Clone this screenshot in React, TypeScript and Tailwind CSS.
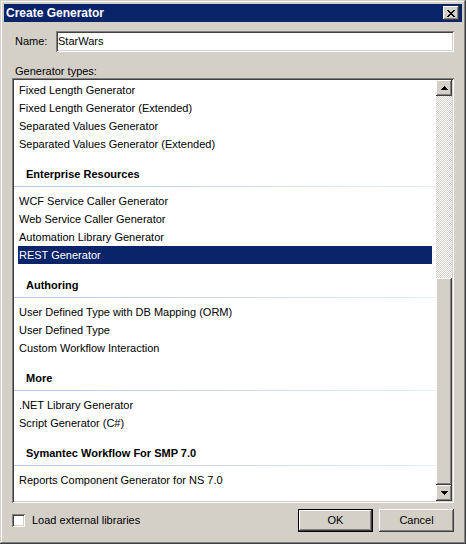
import React from "react";

const raised =
  "shadow-[inset_-1px_-1px_#404040,inset_1px_1px_#ffffff,inset_-2px_-2px_#808080,inset_2px_2px_#d4d0c8]";
const sunken =
  "shadow-[inset_1px_1px_#808080,inset_-1px_-1px_#ffffff,inset_2px_2px_#404040,inset_-2px_-2px_#d4d0c8]";

type Group = { title?: string; items: string[] };

const groups: Group[] = [
  {
    items: [
      "Fixed Length Generator",
      "Fixed Length Generator (Extended)",
      "Separated Values Generator",
      "Separated Values Generator (Extended)",
    ],
  },
  {
    title: "Enterprise Resources",
    items: [
      "WCF Service Caller Generator",
      "Web Service Caller Generator",
      "Automation Library Generator",
      "REST Generator",
    ],
  },
  {
    title: "Authoring",
    items: [
      "User Defined Type with DB Mapping (ORM)",
      "User Defined Type",
      "Custom Workflow Interaction",
    ],
  },
  {
    title: "More",
    items: [".NET Library Generator", "Script Generator (C#)"],
  },
  {
    title: "Symantec Workflow For SMP 7.0",
    items: ["Reports Component Generator for NS 7.0"],
  },
];

function CloseGlyph() {
  const rows = [
    "xx....xx",
    ".xx..xx.",
    "..xxxx..",
    "...xx...",
    "..xxxx..",
    ".xx..xx.",
    "xx....xx",
  ];
  return (
    <svg width="8" height="7" viewBox="0 0 8 7" shapeRendering="crispEdges">
      {rows.map((r, y) =>
        r.split("").map((c, x) =>
          c === "x" ? <rect key={`${x}-${y}`} x={x} y={y} width="1" height="1" fill="#000" /> : null
        )
      )}
    </svg>
  );
}

function Arrow({ up }: { up: boolean }) {
  return (
    <svg width="7" height="4" viewBox="0 0 7 4" shapeRendering="crispEdges">
      {up ? (
        <>
          <rect x="3" y="0" width="1" height="1" fill="#000" />
          <rect x="2" y="1" width="3" height="1" fill="#000" />
          <rect x="1" y="2" width="5" height="1" fill="#000" />
          <rect x="0" y="3" width="7" height="1" fill="#000" />
        </>
      ) : (
        <>
          <rect x="0" y="0" width="7" height="1" fill="#000" />
          <rect x="1" y="1" width="5" height="1" fill="#000" />
          <rect x="2" y="2" width="3" height="1" fill="#000" />
          <rect x="3" y="3" width="1" height="1" fill="#000" />
        </>
      )}
    </svg>
  );
}

export default function App() {
  return (
    <div className="w-[466px] h-[544px] bg-[#d4d0c8] p-[4px] flex flex-col font-['Liberation_Sans',Arial,sans-serif] text-[11px] text-black shadow-[inset_-1px_-1px_#404040,inset_1px_1px_#d4d0c8,inset_-2px_-2px_#808080,inset_2px_2px_#ffffff]">
      {/* Title bar */}
      <div className="h-[18px] bg-[#0a246a] flex items-center justify-between">
        <span className="pl-[2px] text-white font-bold text-[12px] leading-[18px]">Create Generator</span>
        <div className={`w-[16px] h-[14px] mr-[3px] bg-[#d4d0c8] flex items-center justify-center ${raised}`}>
          <CloseGlyph />
        </div>
      </div>

      {/* Content */}
      <div className="flex-1 flex flex-col px-[8px]">
        <div className="mt-[9px] flex items-center h-[21px]">
          <div className="w-[44px] pl-[3px]">Name:</div>
          <div className={`flex-1 h-[21px] bg-white flex items-center px-[2px] ${sunken}`}>StarWars</div>
        </div>

        <div className="mt-[12px] h-[14px] leading-[14px] pl-[3px]">Generator types:</div>

        <div className={`h-[425px] bg-white p-[2px] flex ${sunken}`}>
          <div className="flex-1 flex flex-col pt-[1px] overflow-hidden">
            {groups.map((g, gi) => (
              <div key={gi} className="flex flex-col">
                {g.title && (
                  <div className="h-[39px] flex flex-col">
                    <div className="mt-[14px] h-[14px] leading-[14px] pl-[12px] font-bold text-[11px]">
                      {g.title}
                    </div>
                    <div className="mt-[5px] h-px bg-gradient-to-r from-[#b0c6e6] to-[#e8eef8]" />
                  </div>
                )}
                {g.items.map((it) => {
                  const sel = it === "REST Generator";
                  return (
                    <div
                      key={it}
                      className={`h-[18px] leading-[18px] mx-[4px] pl-[1px] whitespace-nowrap ${
                        sel ? "bg-[#0a246a] text-white" : ""
                      }`}
                    >
                      {it}
                    </div>
                  );
                })}
              </div>
            ))}
          </div>

          {/* Scrollbar */}
          <div className="w-[16px] flex flex-col">
            <div className={`h-[16px] bg-[#d4d0c8] flex items-center justify-center ${raised}`}>
              <Arrow up />
            </div>
            <div className="h-[182px] bg-[repeating-conic-gradient(#d4d0c8_0%_25%,#ffffff_0%_50%)] bg-[length:2px_2px]" />
            <div className={`flex-1 bg-[#d4d0c8] ${raised}`} />
            <div className={`h-[16px] bg-[#d4d0c8] flex items-center justify-center ${raised}`}>
              <Arrow up={false} />
            </div>
          </div>
        </div>

        {/* Bottom row */}
        <div className="mt-[6px] h-[23px] flex items-center">
          <div className={`w-[13px] h-[13px] bg-white ${sunken}`} />
          <span className="ml-[7px]">Load external libraries</span>
          <div className="flex-1" />
          <div className="w-[75px] h-[23px] border border-black flex">
            <div className={`flex-1 bg-[#d4d0c8] flex items-center justify-center ${raised}`}>OK</div>
          </div>
          <div className={`ml-[6px] w-[75px] h-[23px] bg-[#d4d0c8] flex items-center justify-center ${raised}`}>
            Cancel
          </div>
        </div>
      </div>
    </div>
  );
}
